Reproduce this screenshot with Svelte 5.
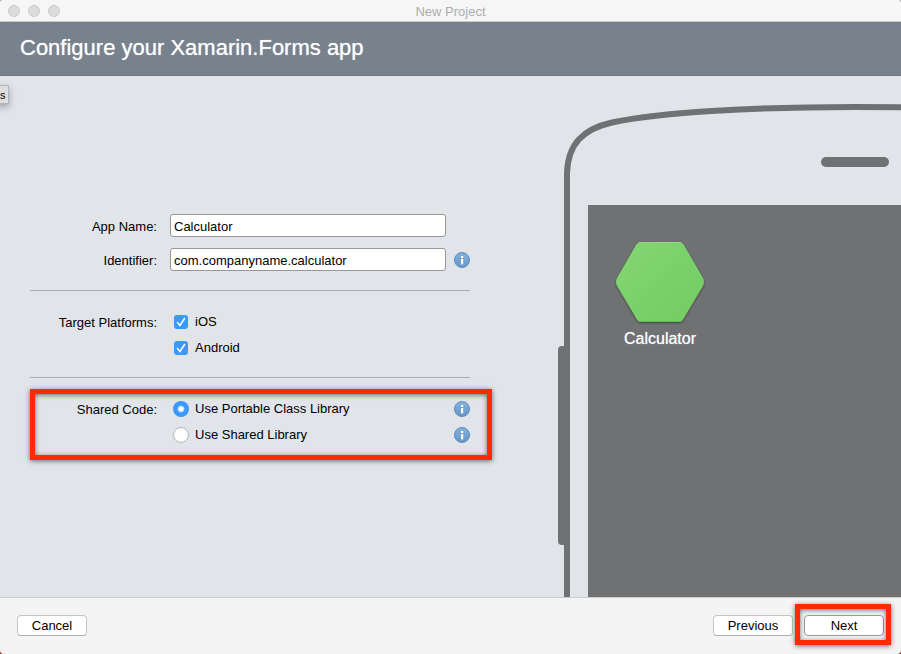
<script>
  let appName = $state('Calculator');
  let identifier = $state('com.companyname.calculator');
  let ios = $state(true);
  let android = $state(true);
  let shared = $state('pcl');
</script>

{#snippet info(label)}
  <button class="info" type="button" aria-label={label}>
    <svg width="16" height="16" viewBox="0 0 16 16" aria-hidden="true">
      <defs>
        <linearGradient id="infoFill" x1="0" y1="0" x2="0" y2="1">
          <stop offset="0" stop-color="#83b4de" />
          <stop offset="1" stop-color="#6594c6" />
        </linearGradient>
      </defs>
      <circle cx="8" cy="8" r="7.5" fill="url(#infoFill)" stroke="#5d8dbd" />
      <rect x="7" y="4" width="2.2" height="2" fill="#fff" />
      <rect x="7" y="7" width="2.2" height="5.4" fill="#fff" />
    </svg>
  </button>
{/snippet}

<div class="window">
  <div class="titlebar">
    <div class="lights"><span></span><span></span><span></span></div>
    <span class="title">New Project</span>
  </div>

  <header><h1>Configure your Xamarin.Forms app</h1></header>

  <main>
    <span class="tooltip">s</span>

    <form id="config" onsubmit={(e) => e.preventDefault()}>
      <section class="fields">
        <div class="row">
          <label class="name" for="appName">App Name:</label>
          <input id="appName" type="text" bind:value={appName} />
        </div>
        <div class="row">
          <label class="name" for="identifier">Identifier:</label>
          <input id="identifier" type="text" bind:value={identifier} />
          {@render info('About the identifier')}
        </div>
      </section>

      <hr />

      <section class="choices" role="group" aria-labelledby="platforms">
        <div class="row">
          <span class="name" id="platforms">Target Platforms:</span>
          <label class="option"><input type="checkbox" bind:checked={ios} />iOS</label>
        </div>
        <div class="row">
          <label class="option"><input type="checkbox" bind:checked={android} />Android</label>
        </div>
      </section>

      <hr />

      <section class="choices" role="radiogroup" aria-labelledby="sharedCode">
        <div class="row">
          <span class="name" id="sharedCode">Shared Code:</span>
          <label class="option"><input type="radio" name="shared" value="pcl" bind:group={shared} />Use Portable Class Library</label>
          {@render info('About portable class libraries')}
        </div>
        <div class="row">
          <label class="option"><input type="radio" name="shared" value="lib" bind:group={shared} />Use Shared Library</label>
          {@render info('About shared libraries')}
        </div>
        <span class="marker wide"></span>
      </section>
    </form>

    <aside class="phone">
      <svg class="outline" viewBox="0 0 700 521" width="700" height="521" aria-hidden="true">
        <path d="M9 560V97C10 68 25 53 54 46.500C104 36 200 31 297 31C394 31 490 36 540 46.500C569 53 584 68 585 97V560" fill="none" stroke="#6f7173" stroke-width="6" />
        <rect x="0" y="270" width="12" height="199" rx="4" fill="#6f7173" />
        <rect x="263" y="81" width="68" height="10" rx="5" fill="#6f7173" />
      </svg>
      <div class="screen">
        <figure>
          <svg width="92" height="86" viewBox="0 0 92 86" aria-hidden="true">
            <defs>
              <linearGradient id="leaf" x1="0" y1="0" x2="1" y2="1">
                <stop offset="0" stop-color="#86d675" />
                <stop offset="0.5" stop-color="#7ad16a" />
                <stop offset="1" stop-color="#73cc62" />
              </linearGradient>
            </defs>
            <g class="hex">
              <path d="M27 2H65Q68 2 70 5L89 38Q91 42 89 46L70 78Q68 82 65 82H27Q24 82 22 78L3 46Q1 42 3 38L22 5Q24 2 27 2Z" fill="url(#leaf)" />
              <path d="M25 2.5H67" stroke="#93da84" />
              <path d="M25 81.5H67" stroke="#5fb850" />
            </g>
          </svg>
          <figcaption>{appName}</figcaption>
        </figure>
      </div>
    </aside>
  </main>

  <footer>
    <button type="button" class="push">Cancel</button>
    <div class="steps">
      <button type="button" class="push">Previous</button>
      <div class="marked">
        <button type="submit" form="config" class="push next">Next</button>
        <span class="marker"></span>
      </div>
    </div>
  </footer>
</div>

<style>
  :global(body) {
    margin: 0;
    background: linear-gradient(#b9b9b9, #8c3a2c);
  }
  .window {
    min-height: 100vh;
    display: flex;
    flex-direction: column;
    box-sizing: border-box;
    overflow: hidden;
    border-radius: 4px;
    background: #f4f4f4;
    color: #000;
    font: 13px/16px 'Liberation Sans', Arial, sans-serif;
  }
  .titlebar {
    position: relative;
    display: flex;
    align-items: center;
    justify-content: center;
    height: 21px;
    background: #f6f6f6;
    border-bottom: 1px solid #c8c8c8;
  }
  .lights {
    position: absolute;
    left: 8px;
    display: flex;
    gap: 8px;
  }
  .lights span {
    width: 10px;
    height: 10px;
    border: 1px solid #cbcbcb;
    border-radius: 50%;
    background: #dcdcdc;
  }
  .title {
    color: #adadad;
    padding-top: 2px;
  }
  header {
    display: flex;
    align-items: center;
    height: 53px;
    padding: 0 20px;
    background: #78828c;
    border-bottom: 1px solid #6c7580;
  }
  h1 {
    margin: 0;
    padding-bottom: 2px;
    color: #fff;
    font-size: 22px;
    line-height: 26px;
    font-weight: 400;
    text-shadow: 0 0 1px rgba(255, 255, 255, 0.7);
  }
  main {
    position: relative;
    flex: 1;
    display: flex;
    gap: 88px;
    padding-left: 30px;
    background: #e1e4e9;
    border-bottom: 1px solid #cdced0;
  }
  .tooltip {
    position: absolute;
    left: -4px;
    top: 9px;
    width: 13px;
    height: 19px;
    box-sizing: border-box;
    padding-left: 3px;
    border: 1px solid #b5b5b6;
    background: #dededf;
    box-shadow: 0 3px 7px rgba(0, 0, 0, 0.3);
    font-size: 11px;
    line-height: 18px;
  }
  form {
    flex: 0 1 440px;
    padding: 138px 0 62px;
  }
  .fields {
    display: grid;
    gap: 11px;
  }
  .row {
    display: grid;
    grid-template-columns: 127px 1fr 16px;
    align-items: center;
  }
  .name {
    grid-column: 1;
    text-align: right;
    padding-top: 2px;
  }
  .row > input,
  .option {
    grid-column: 2;
  }
  input[type='text'] {
    min-width: 0;
    height: 23px;
    box-sizing: border-box;
    margin: 0 8px 0 13px;
    padding: 2px 3px 0;
    border: 1px solid #979797;
    border-radius: 3px;
    background: #fff;
    color: #000;
    font: inherit;
  }
  .info {
    grid-column: 3;
    width: 16px;
    height: 16px;
    padding: 0;
    border: 0;
    background: none;
  }
  .info svg {
    display: block;
  }
  hr {
    height: 1px;
    margin: 19px 0 18px;
    border: 0;
    background: #adb0b3;
  }
  .choices {
    position: relative;
  }
  .choices .row {
    height: 26px;
  }
  .choices + hr {
    margin-top: 16px;
  }
  .option {
    display: flex;
    align-items: center;
    gap: 6px;
    padding-left: 16px;
  }
  .option input {
    appearance: none;
    box-sizing: border-box;
    width: 16px;
    height: 16px;
    margin: 0;
    border: 1px solid #b4b4b4;
    border-radius: 50%;
    background: #fff;
  }
  .option input[type='checkbox'] {
    width: 14px;
    height: 14px;
    margin: 1px;
    border-radius: 3px;
  }
  .option input[type='checkbox']:checked {
    border: 0;
    background: #3b99fc
      url("data:image/svg+xml,%3Csvg xmlns='http://www.w3.org/2000/svg' viewBox='0 0 14 14'%3E%3Cpath d='M3.5 7.5L6 10.5L10.5 3.5' fill='none' stroke='white' stroke-width='1.5' stroke-linecap='round'/%3E%3C/svg%3E");
  }
  .option input[type='radio']:checked {
    border: 0;
    background: radial-gradient(circle, #fff 2px, #3b99fc 4px);
  }
  .marker {
    position: absolute;
    inset: -11px -7px -9px -9px;
    border: 5px solid #ff2a00;
    box-shadow:
      0 1px 5px rgba(0, 0, 0, 0.55),
      inset 0 1px 5px rgba(0, 0, 0, 0.55);
    pointer-events: none;
  }
  .wide {
    inset: -7px -22px -12px 0;
  }
  .phone {
    position: relative;
    flex: 1;
    min-width: 0;
    overflow: hidden;
    display: flex;
    padding: 129px 0 0 30px;
  }
  .outline {
    position: absolute;
    left: 0;
    top: 0;
  }
  .screen {
    position: relative;
    flex: 1;
    padding: 35px 26px;
    background: #6f7173;
  }
  figure {
    width: 92px;
    margin: 0;
    text-align: center;
  }
  figure svg {
    display: block;
  }
  .hex {
    filter: drop-shadow(0 1px 1px rgba(0, 0, 0, 0.4));
  }
  figcaption {
    color: #fff;
    font-size: 16px;
    line-height: 18px;
    padding-top: 4px;
    text-shadow: 0 0 1px rgba(255, 255, 255, 0.7);
  }
  footer {
    display: flex;
    align-items: center;
    justify-content: space-between;
    height: 54px;
    padding: 0 17px 2px;
  }
  .steps {
    display: flex;
    gap: 11px;
  }
  .marked {
    position: relative;
  }
  .push {
    width: 70px;
    height: 21px;
    box-sizing: border-box;
    padding: 2px 0 0;
    border: 1px solid #c5c5c5;
    border-bottom-color: #aeaeae;
    border-radius: 4px;
    background: #fff;
    color: #000;
    font: inherit;
  }
  .steps .push {
    width: 80px;
    display: block;
  }
  .push.next {
    border-color: #9a9a9a;
  }
</style>
